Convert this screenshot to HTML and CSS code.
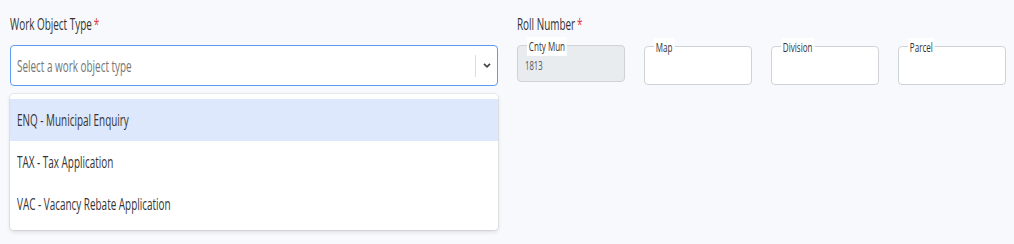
FILE: index.html
```html
<!DOCTYPE html>
<html>
<head>
<meta charset="utf-8">
<link rel="stylesheet" href="styles.css">
</head>
<body>
<div class="page">
  <div class="col-left">
    <div class="label"><span class="sq">Work Object Type<span class="req">*</span></span></div>
    <div class="select">
      <div class="placeholder"><span class="sq">Select a work object type</span></div>
      <div class="sep"></div>
      <svg class="chev" width="8" height="7" viewBox="0 0 8 7"><path d="M1 1.8 L4 4.8 L7 1.8" fill="none" stroke="#444" stroke-width="1.7"/></svg>
    </div>
    <div class="menu">
      <div class="opt active"><span class="sq">ENQ - Municipal Enquiry</span></div>
      <div class="opt"><span class="sq">TAX - Tax Application</span></div>
      <div class="opt"><span class="sq">VAC - Vacancy Rebate Application</span></div>
    </div>
  </div>
  <div class="col-right">
    <div class="label"><span class="sq">Roll Number<span class="req">*</span></span></div>
    <div class="roll">
      <div class="box disabled"><span class="lg"><span class="sq">Cnty Mun</span></span><span class="sq val">1813</span></div>
      <div class="box"><span class="lg"><span class="sq">Map</span></span></div>
      <div class="box"><span class="lg"><span class="sq">Division</span></span></div>
      <div class="box"><span class="lg"><span class="sq">Parcel</span></span></div>
    </div>
  </div>
</div>
</body>
</html>
```

FILE: styles.css
```css
html, body { margin: 0; padding: 0; }
body {
  background: #f8f9fc;
  font-family: "Open Sans", "Noto Sans", sans-serif;
  color: #333;
  width: 1014px;
  height: 244px;
  overflow: hidden;
}
.sq {
  display: inline-block;
  white-space: nowrap;
  transform: scaleX(0.62);
  transform-origin: left center;
}
.page {
  display: flex;
  gap: 19px;
  padding: 13px 0 0 10px;
}
.col-left { width: 488px; display: flex; flex-direction: column; }
.col-right { display: flex; flex-direction: column; }
.label {
  font-size: 16px;
  line-height: 22px;
  height: 22px;
  color: #333;
  margin-bottom: 10px;
}
.req { color: #e53935; margin-left: 3px; }
.select {
  height: 41px;
  box-sizing: border-box;
  border: 1px solid #5b9cf2;
  border-radius: 4px;
  background: #fff;
  display: flex;
  align-items: center;
  padding-left: 6px;
}
.placeholder { flex: 1; font-size: 16px; color: #757575; line-height: 22px; }
.sep { width: 1px; height: 22px; background: #dcdcdc; margin-right: 7px; }
.chev { margin-right: 6px; }
.menu {
  margin-top: 8px;
  background: #fff;
  border-radius: 4px;
  box-shadow: 0 0 0 1px rgba(0,0,0,0.06), 0 2px 4px rgba(0,0,0,0.12);
  padding: 5px 0 5px;
}
.opt {
  height: 42px;
  display: flex;
  align-items: center;
  padding-left: 7px;
  font-size: 16px;
  color: #333;
}
.opt.active { background: #dde8fc; }
.roll {
  display: flex;
  align-items: flex-start;
  gap: 19px;
  margin-top: 1px;
}
.box {
  position: relative;
  width: 108px;
  height: 39px;
  box-sizing: border-box;
  border: 1px solid #cfd3d8;
  border-radius: 4px;
  background: #fff;
  padding: 7px 0 0 7px;
}
.box.disabled {
  background: #e9ecef;
  height: 37px;
  margin-top: -1px;
}
.lg {
  position: absolute;
  top: -9px;
  left: 9px;
  font-size: 13px;
  line-height: 19px;
  color: #333;
}
.lg .sq { background: #fff; padding: 0 3px; }
.val { font-size: 12.5px; color: #555; line-height: 16px; }
```
